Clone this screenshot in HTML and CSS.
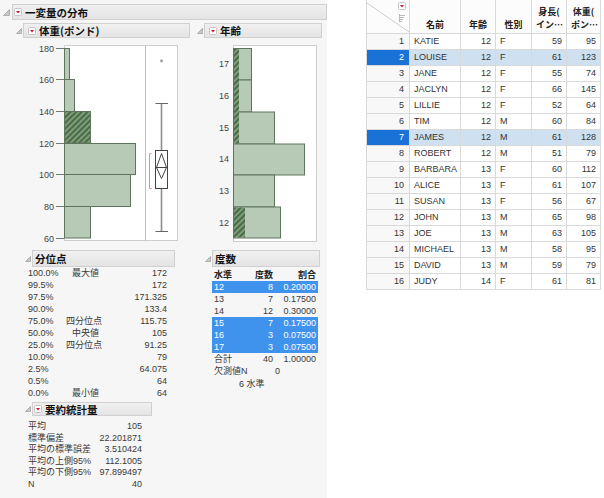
FILE: index.html
```html
<!DOCTYPE html>
<html lang="ja">
<head>
<meta charset="utf-8">
<title>一変量の分布</title>
<link rel="stylesheet" href="styles.css">
</head>
<body>
<div class="report">
  <div class="o1">
    <svg class="tri tri1" width="7" height="7" viewBox="0 0 7 7"><polygon points="6.5,0.5 6.5,6.5 0.5,6.5"/></svg>
    <div class="bar bar1">
      <svg class="menu" width="8" height="8" viewBox="0 0 8 8"><rect x="0.5" y="0.5" width="7" height="7" rx="1"/><polygon points="2,3 6,3 4,5.6"/></svg>
      <span>一変量の分布</span>
    </div>
  </div>
  <div class="cols">
    <div class="col col-w">
      <div class="o2">
        <svg class="tri" width="6" height="6" viewBox="0 0 6 6"><polygon points="5.5,0.5 5.5,5.5 0.5,5.5"/></svg>
        <div class="bar bar2">
          <svg class="menu" width="8" height="8" viewBox="0 0 8 8"><rect x="0.5" y="0.5" width="7" height="7" rx="1"/><polygon points="2,3 6,3 4,5.6"/></svg>
          <span>体重(ポンド)</span>
        </div>
      </div>
      <svg class="chart" width="174" height="207" viewBox="16 38 174 207">
        <defs>
          <pattern id="hw" width="4" height="4" patternUnits="userSpaceOnUse" patternTransform="rotate(45)">
            <rect width="4" height="4" fill="#7e9e7a"/>
            <rect width="2" height="4" fill="#4b6b48"/>
          </pattern>
        </defs>
        <rect x="64.5" y="45.5" width="113" height="195" fill="#fff" stroke="#cfcfcf"/>
        <line x1="145.5" y1="45" x2="145.5" y2="241" stroke="#bdbdbd"/>
        <g class="bars">
          <rect x="64.5" y="48.5" width="5" height="31"/>
          <rect x="64.5" y="79.5" width="10" height="32"/>
          <rect x="64.5" y="111.5" width="26" height="31.5" fill="url(#hw)"/>
          <rect x="64.5" y="143.5" width="71" height="31"/>
          <rect x="64.5" y="174.5" width="66" height="32"/>
          <rect x="64.5" y="206.5" width="26" height="31.5"/>
        </g>
        <path d="M56 48.5H64M56 79.5H64M56 111.5H64M56 143.5H64M56 174.5H64M56 206.5H64M56 238.5H64" stroke="#777" fill="none"/>
        <g class="axis">
          <text x="54" y="51.5">180</text>
          <text x="54" y="82.5">160</text>
          <text x="54" y="114.5">140</text>
          <text x="54" y="146.5">120</text>
          <text x="54" y="177.5">100</text>
          <text x="54" y="209.5">80</text>
          <text x="54" y="241.5">60</text>
        </g>
        <line x1="161.5" y1="103.5" x2="161.5" y2="232" stroke="#8c8c8c" stroke-width="1.6"/>
        <line x1="155.5" y1="103.5" x2="168" y2="103.5" stroke="#666"/>
        <line x1="155.5" y1="231.5" x2="168" y2="231.5" stroke="#666"/>
        <rect x="155.5" y="150.5" width="12" height="38" fill="#fff" stroke="#444"/>
        <line x1="155.5" y1="167.5" x2="167.5" y2="167.5" stroke="#444"/>
        <polygon points="161.5,153.5 166.5,167.5 161.5,178.5 156.5,167.5" fill="none" stroke="#444"/>
        <path d="M151.5 153.5H149.5V188.5H151.5" stroke="#e48c9a" fill="none"/>
        <circle cx="161.5" cy="61" r="1.4" fill="#9a9a9a"/>
      </svg>
      <div class="sec sec-q">
        <div class="sec-hdr">
          <svg class="tri" width="6" height="6" viewBox="0 0 6 6"><polygon points="5.5,0.5 5.5,5.5 0.5,5.5"/></svg>
          <div class="bar bar3"><span>分位点</span></div>
        </div>
        <div class="qgrid">
          <span>100.0%</span><span class="r">最大値</span><span class="r">172</span>
          <span>99.5%</span><span></span><span class="r">172</span>
          <span>97.5%</span><span></span><span class="r">171.325</span>
          <span>90.0%</span><span></span><span class="r">133.4</span>
          <span>75.0%</span><span class="r">四分位点</span><span class="r">115.75</span>
          <span>50.0%</span><span class="r">中央値</span><span class="r">105</span>
          <span>25.0%</span><span class="r">四分位点</span><span class="r">91.25</span>
          <span>10.0%</span><span></span><span class="r">79</span>
          <span>2.5%</span><span></span><span class="r">64.075</span>
          <span>0.5%</span><span></span><span class="r">64</span>
          <span>0.0%</span><span class="r">最小値</span><span class="r">64</span>
        </div>
      </div>
      <div class="sec sec-s">
        <div class="sec-hdr">
          <svg class="tri" width="6" height="6" viewBox="0 0 6 6"><polygon points="5.5,0.5 5.5,5.5 0.5,5.5"/></svg>
          <div class="bar bar4">
            <svg class="menu" width="8" height="8" viewBox="0 0 8 8"><rect x="0.5" y="0.5" width="7" height="7" rx="1"/><polygon points="2,3 6,3 4,5.6"/></svg>
            <span>要約統計量</span>
          </div>
        </div>
        <div class="sgrid">
          <span>平均</span><span class="r">105</span>
          <span>標準偏差</span><span class="r">22.201871</span>
          <span>平均の標準誤差</span><span class="r">3.510424</span>
          <span>平均の上側95%</span><span class="r">112.1005</span>
          <span>平均の下側95%</span><span class="r">97.899497</span>
          <span>N</span><span class="r">40</span>
        </div>
      </div>
    </div>
    <div class="col col-a">
      <div class="o2">
        <svg class="tri" width="6" height="6" viewBox="0 0 6 6"><polygon points="5.5,0.5 5.5,5.5 0.5,5.5"/></svg>
        <div class="bar bar2">
          <svg class="menu" width="8" height="8" viewBox="0 0 8 8"><rect x="0.5" y="0.5" width="7" height="7" rx="1"/><polygon points="2,3 6,3 4,5.6"/></svg>
          <span>年齢</span>
        </div>
      </div>
      <svg class="chart" width="129" height="207" viewBox="197 38 129 207">
        <defs>
          <pattern id="ha" width="4" height="4" patternUnits="userSpaceOnUse" patternTransform="rotate(45)">
            <rect width="4" height="4" fill="#7e9e7a"/>
            <rect width="2" height="4" fill="#4b6b48"/>
          </pattern>
        </defs>
        <rect x="233.5" y="45.5" width="83" height="196" fill="#fff" stroke="#cfcfcf"/>
        <g class="bars">
          <rect x="233.5" y="48.5" width="18" height="31.5"/>
          <rect x="233.5" y="80" width="18" height="32"/>
          <rect x="233.5" y="112" width="41" height="32"/>
          <rect x="233.5" y="144" width="71" height="31"/>
          <rect x="233.5" y="175" width="41" height="32"/>
          <rect x="233.5" y="207" width="47" height="31"/>
        </g>
        <rect x="234" y="49" width="5" height="94.5" fill="url(#ha)"/>
        <rect x="234" y="207.5" width="11" height="30" fill="url(#ha)"/>
        <g class="axis">
          <text x="229" y="66.5">17</text>
          <text x="229" y="99">16</text>
          <text x="229" y="130.5">15</text>
          <text x="229" y="162">14</text>
          <text x="229" y="194">13</text>
          <text x="229" y="226">12</text>
        </g>
      </svg>
      <div class="sec sec-f">
        <div class="sec-hdr">
          <svg class="tri" width="6" height="6" viewBox="0 0 6 6"><polygon points="5.5,0.5 5.5,5.5 0.5,5.5"/></svg>
          <div class="bar bar3"><span>度数</span></div>
        </div>
        <table class="ftab">
          <tr class="fh"><th class="l">水準</th><th>度数</th><th>割合</th></tr>
          <tr class="hl"><td class="l">12</td><td>8</td><td>0.20000</td></tr>
          <tr><td class="l">13</td><td>7</td><td>0.17500</td></tr>
          <tr><td class="l">14</td><td>12</td><td>0.30000</td></tr>
          <tr class="hl"><td class="l">15</td><td>7</td><td>0.17500</td></tr>
          <tr class="hl"><td class="l">16</td><td>3</td><td>0.07500</td></tr>
          <tr class="hl"><td class="l">17</td><td>3</td><td>0.07500</td></tr>
          <tr><td class="l">合計</td><td>40</td><td>1.00000</td></tr>
        </table>
        <div class="fmiss"><span>欠測値N</span><span class="r">0</span></div>
        <div class="flev">6 水準</div>
      </div>
    </div>
  </div>
</div>
<div class="data">
  <table class="dt">
    <colgroup><col class="c0"><col class="c1"><col class="c2"><col class="c3"><col class="c4"><col class="c5"></colgroup>
    <tr class="head">
      <th class="corner">
        <svg width="42" height="32" viewBox="0 0 42 32">
          <line x1="0" y1="3" x2="42" y2="32" stroke="#cdcdcd"/>
          <rect x="31.5" y="2.5" width="7" height="7" rx="1" fill="#fff" stroke="#c4c4c4"/>
          <polygon points="33,5 37,5 35,7.6" fill="#d0142c"/>
          <rect x="32" y="14" width="1" height="8" fill="#b8b8b8"/>
          <rect x="33" y="15" width="5" height="1" fill="#b8b8b8"/>
          <rect x="33" y="17" width="4" height="1" fill="#b8b8b8"/>
          <rect x="33" y="19" width="3" height="1" fill="#b8b8b8"/>
          <rect x="33" y="21" width="2" height="1" fill="#b8b8b8"/>
        </svg>
      </th>
      <th>名前</th>
      <th>年齢</th>
      <th>性別</th>
      <th>身長(<br>イン…</th>
      <th>体重(<br>ポン…</th>
    </tr>
    <tr><td class="rn">1</td><td>KATIE</td><td class="r">12</td><td>F</td><td class="r">59</td><td class="r">95</td></tr>
    <tr class="sel"><td class="rn">2</td><td>LOUISE</td><td class="r">12</td><td>F</td><td class="r">61</td><td class="r">123</td></tr>
    <tr><td class="rn">3</td><td>JANE</td><td class="r">12</td><td>F</td><td class="r">55</td><td class="r">74</td></tr>
    <tr><td class="rn">4</td><td>JACLYN</td><td class="r">12</td><td>F</td><td class="r">66</td><td class="r">145</td></tr>
    <tr><td class="rn">5</td><td>LILLIE</td><td class="r">12</td><td>F</td><td class="r">52</td><td class="r">64</td></tr>
    <tr><td class="rn">6</td><td>TIM</td><td class="r">12</td><td>M</td><td class="r">60</td><td class="r">84</td></tr>
    <tr class="sel"><td class="rn">7</td><td>JAMES</td><td class="r">12</td><td>M</td><td class="r">61</td><td class="r">128</td></tr>
    <tr><td class="rn">8</td><td>ROBERT</td><td class="r">12</td><td>M</td><td class="r">51</td><td class="r">79</td></tr>
    <tr><td class="rn">9</td><td>BARBARA</td><td class="r">13</td><td>F</td><td class="r">60</td><td class="r">112</td></tr>
    <tr><td class="rn">10</td><td>ALICE</td><td class="r">13</td><td>F</td><td class="r">61</td><td class="r">107</td></tr>
    <tr><td class="rn">11</td><td>SUSAN</td><td class="r">13</td><td>F</td><td class="r">56</td><td class="r">67</td></tr>
    <tr><td class="rn">12</td><td>JOHN</td><td class="r">13</td><td>M</td><td class="r">65</td><td class="r">98</td></tr>
    <tr><td class="rn">13</td><td>JOE</td><td class="r">13</td><td>M</td><td class="r">63</td><td class="r">105</td></tr>
    <tr><td class="rn">14</td><td>MICHAEL</td><td class="r">13</td><td>M</td><td class="r">58</td><td class="r">95</td></tr>
    <tr><td class="rn">15</td><td>DAVID</td><td class="r">13</td><td>M</td><td class="r">59</td><td class="r">79</td></tr>
    <tr><td class="rn">16</td><td>JUDY</td><td class="r">14</td><td>F</td><td class="r">61</td><td class="r">81</td></tr>
  </table>
</div>
</body>
</html>
```

FILE: styles.css
```css
* { box-sizing: border-box; }
html, body { margin: 0; padding: 0; }
body {
  width: 604px;
  height: 498px;
  overflow: hidden;
  display: flex;
  align-items: flex-start;
  font-family: "Liberation Sans", "Noto Sans CJK JP", sans-serif;
  font-size: 9px;
  color: #3a3a3a;
  background: #fff;
}

/* ---------- report panel ---------- */
.report {
  flex: none;
  width: 327px;
  height: 498px;
  background: #f6f6f6;
  padding-top: 4px;
}
.o1, .o2, .sec-hdr { display: flex; align-items: center; }
.o1 { padding-left: 3px; }
.tri { flex: none; margin-right: 1px; }
.tri1 { margin-right: 2px; }
.tri polygon { fill: #c8c8c8; stroke: #a2a2a2; stroke-width: 0.8; }

.bar {
  flex: 1;
  display: flex;
  align-items: center;
  background: linear-gradient(#f0f0f0, #e4e4e4);
  border: 1px solid #d0d0d0;
  padding-left: 1px;
  font-family: "Noto Sans CJK JP", sans-serif;
  font-weight: bold;
  font-size: 10.5px;
  color: #111;
  white-space: nowrap;
}
.bar1 { height: 16px; }
.bar2 { height: 15px; padding-left: 4px; }
.bar3 { height: 17px; padding-left: 2px; }
.bar4 { height: 14px; padding-left: 1px; }
.menu { flex: none; margin-right: 3px; }
.menu rect { fill: #fff; stroke: #c4c4c4; }
.menu polygon { fill: #d0142c; }

.cols { display: flex; margin-top: 3px; }
.col { flex: none; }
.col-w { margin-left: 16px; width: 174px; }
.col-a { margin-left: 7px; width: 129px; }
.col-a .bar2 { margin-right: 4px; }

.chart { display: block; }
.bars rect { fill: #b7cab5; stroke: #5f745d; stroke-width: 1; }
.bars rect[fill] { fill: url(#hw); }
.axis text {
  font-family: "Liberation Sans", sans-serif;
  font-size: 9px;
  fill: #444;
  text-anchor: end;
}

.r { text-align: right; }

/* quantiles */
.sec-q { margin-top: 5px; margin-left: 9px; width: 150px; }
.qgrid {
  display: grid;
  grid-template-columns: 38px 33px 68px;
  grid-auto-rows: 12px;
  line-height: 12px;
  padding-left: 3px;
  white-space: nowrap;
}

/* summary stats */
.sec-s { margin-top: 3px; margin-left: 9px; width: 127px; }
.sgrid {
  display: grid;
  grid-template-columns: 70px 44px;
  grid-auto-rows: 11.6px;
  line-height: 11.6px;
  padding-left: 3px;
  margin-top: 5px;
  white-space: nowrap;
}

/* frequencies */
.sec-f { margin-top: 5px; margin-left: 8px; width: 115px; }
.ftab {
  margin-left: 7px;
  margin-top: 2px;
  width: 106px;
  border-collapse: collapse;
  table-layout: fixed;
}
.ftab th, .ftab td {
  height: 12px;
  padding: 0 2px;
  line-height: 12px;
  text-align: right;
  font-weight: normal;
  white-space: nowrap;
}
.ftab th { font-weight: bold; color: #222; }
.ftab th:nth-child(1), .ftab td:nth-child(1) { width: 33px; }
.ftab th:nth-child(2), .ftab td:nth-child(2) { width: 30px; }
.ftab .l { text-align: left; }
.ftab tr.hl td { background: #3f93ec; color: #fff; }
.fmiss {
  display: grid;
  grid-template-columns: 52px 16px;
  margin-left: 9px;
  height: 13px;
  line-height: 13px;
}
.fmiss .r { padding-right: 2px; }
.flev { margin-left: 34px; height: 13px; line-height: 13px; }

/* ---------- data table ---------- */
.data { flex: none; margin-left: 39px; }
.dt {
  border-collapse: collapse;
  table-layout: fixed;
  width: 234px;
}
.c0 { width: 43px; }
.c1 { width: 51px; }
.c2 { width: 35px; }
.c3 { width: 36px; }
.c4 { width: 35px; }
.c5 { width: 34px; }
.dt th, .dt td {
  border: 1px solid #d9d9d9;
  padding: 0 4px;
  white-space: nowrap;
  overflow: hidden;
}
.dt tr { height: 16px; }
.dt td { line-height: 14px; color: #333; }
.dt tr.head { height: 33px; }
.dt th {
  border-top: none;
  vertical-align: bottom;
  padding-bottom: 2px;
  font-family: "Noto Sans CJK JP", sans-serif;
  font-weight: bold;
  font-size: 9px;
  line-height: 13px;
  color: #222;
  text-align: center;
  background: #fcfcfc;
}
.dt th.corner { padding: 0; vertical-align: top; line-height: 0; }
.dt th.corner svg { display: block; }
.dt td.rn { text-align: right; padding-right: 5px; background: #f8f8f8; }
.dt td.r { text-align: right; }
.dt tr.sel td { background: #cfe0f1; }
.dt tr.sel td.rn { background: #1a72d6; color: #fff; }
```
